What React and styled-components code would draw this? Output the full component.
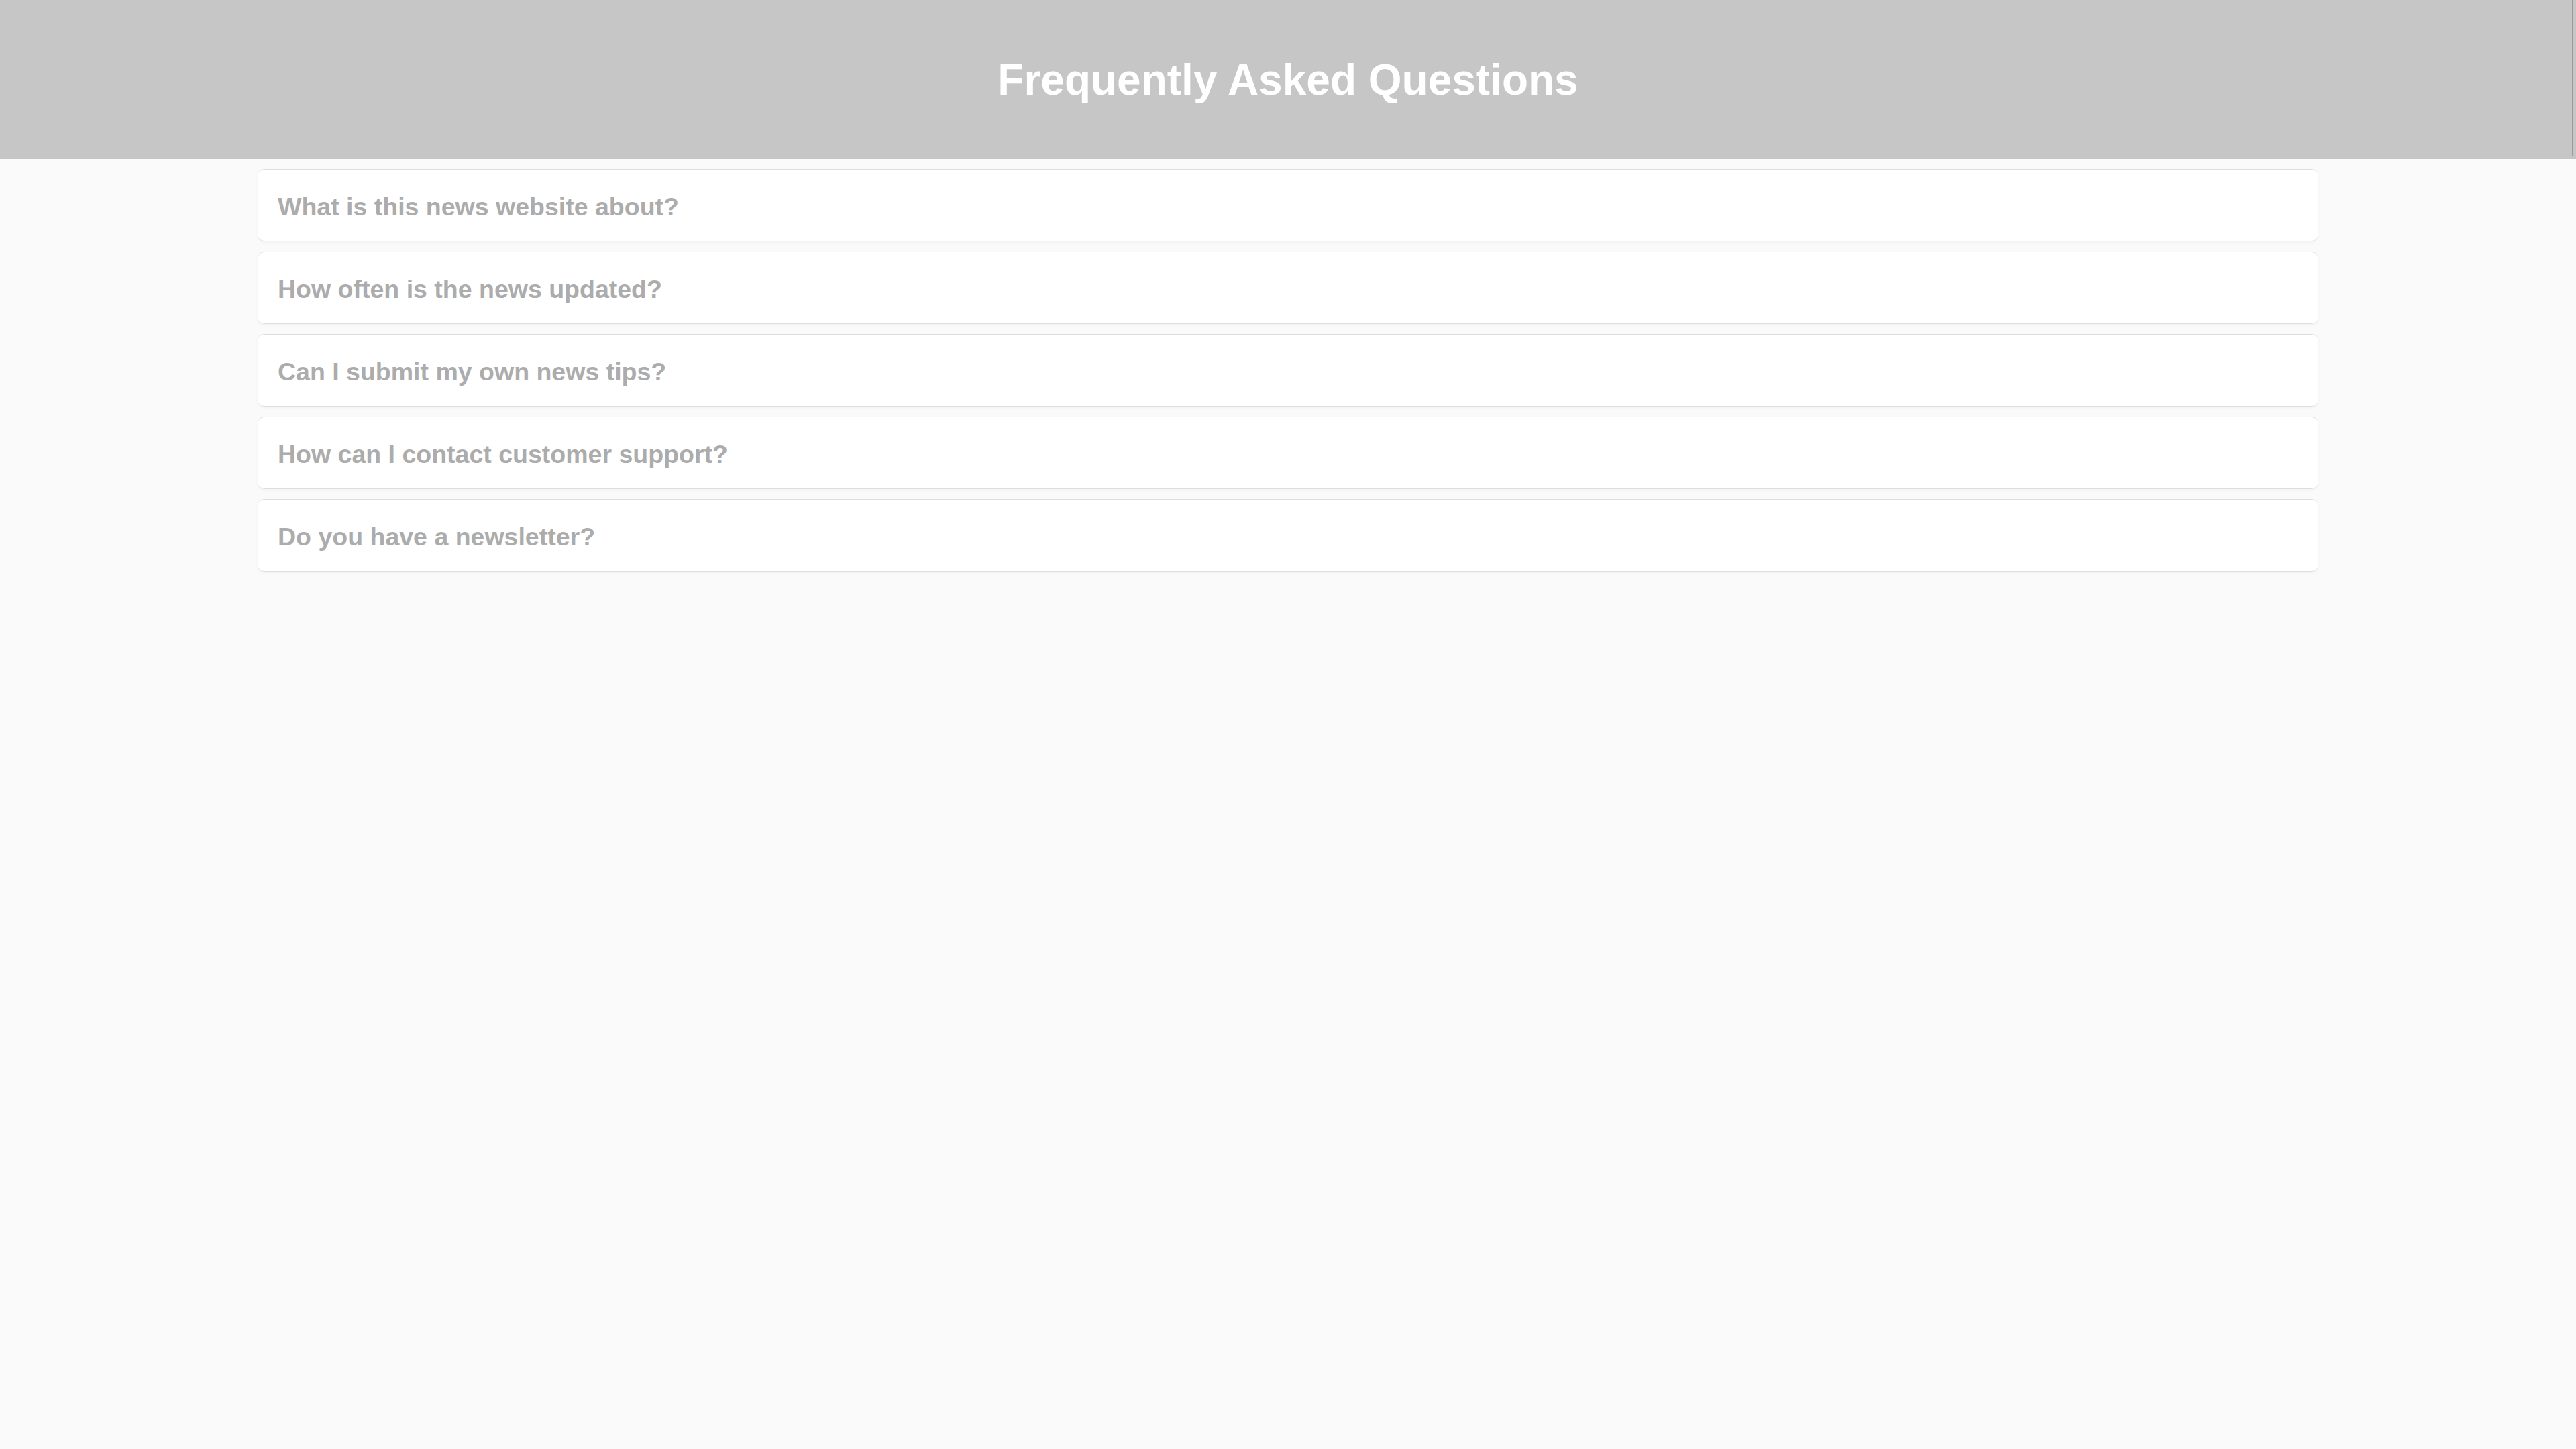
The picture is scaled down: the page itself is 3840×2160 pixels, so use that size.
import React from 'react'
import styled, { createGlobalStyle } from 'styled-components'

const GlobalStyle = createGlobalStyle`
  html, body {
    margin: 0;
    padding: 0;
    background: #fafafa;
    font-family: "Liberation Sans", Arial, sans-serif;
  }
`

const Page = styled.div`
  min-height: 100vh;
  background: #fafafa;
`

const Header = styled.header`
  position: relative;
  height: 237px;
  background: #c6c6c6;
  display: flex;
  align-items: center;
  justify-content: center;

  &::after {
    content: '';
    position: absolute;
    top: 0;
    right: 5px;
    bottom: 5px;
    width: 1px;
    background: #9a9a9a;
  }
`

const Title = styled.h1`
  margin: 0;
  font-size: 64px;
  font-weight: 700;
  color: #ffffff;
  line-height: normal;
`

const List = styled.div`
  width: 80%;
  margin: 0 auto;
  padding-top: 15px;
  display: flex;
  flex-direction: column;
  gap: 15px;
`

const Item = styled.div`
  background: #ffffff;
  border-radius: 10px;
  border-top: 1px solid #dedede;
  border-bottom: 1px solid #dedede;
  box-shadow: 0 2px 5px rgba(0, 0, 0, 0.035);
  padding: 34px 30px 30px;
`

const Question = styled.h3`
  margin: 0;
  font-size: 37.5px;
  font-weight: 700;
  color: #acacac;
  line-height: 42px;
`

const questions = [
  'What is this news website about?',
  'How often is the news updated?',
  'Can I submit my own news tips?',
  'How can I contact customer support?',
  'Do you have a newsletter?',
]

const App = () => {
  return (
    <Page>
      <GlobalStyle />
      <Header>
        <Title>Frequently Asked Questions</Title>
      </Header>
      <List>
        {questions.map(q => (
          <Item key={q}>
            <Question>{q}</Question>
          </Item>
        ))}
      </List>
    </Page>
  )
}

export default App
